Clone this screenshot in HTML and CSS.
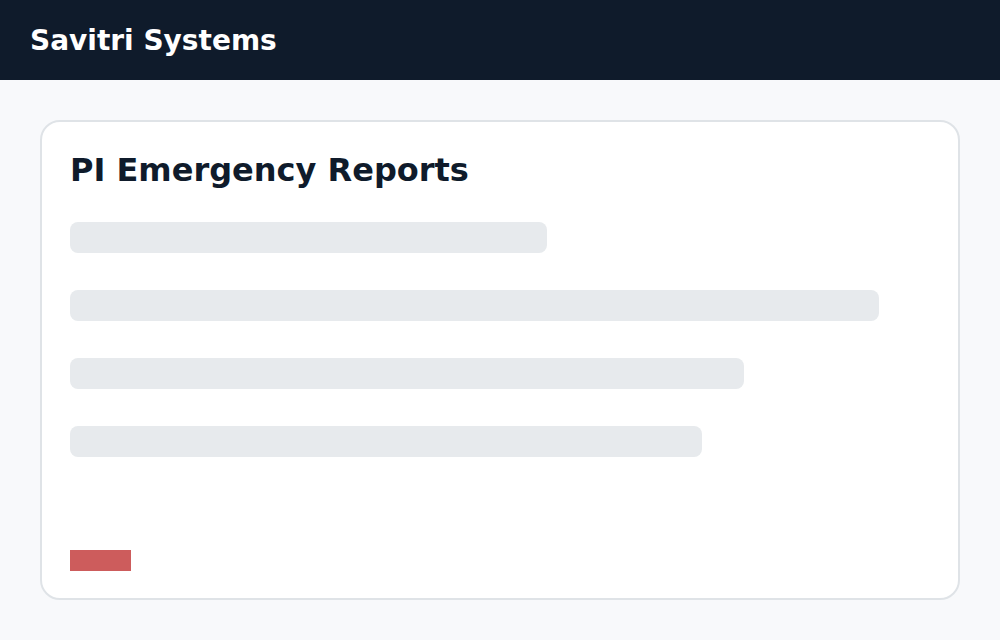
FILE: index.html
```html
<!DOCTYPE html>
<html lang="en">

<head>
  <meta charset="UTF-8" />
  <meta name="viewport" content="width=device-width, initial-scale=1.0"/>
  <title>Savitri Systems</title>
  <link rel="stylesheet" href="styles.css">
</head>

<body>
  <header class="topbar">
    <div class="brand">Savitri Systems</div>
  </header>

  <main class="main">
    <section class="card">
      <h1 class="card-title">PI Emergency Reports</h1>
      <div class="skeleton-list">
        <div class="skeleton" style="width: 477px"></div>
        <div class="skeleton" style="width: 809px"></div>
        <div class="skeleton" style="width: 674px"></div>
        <div class="skeleton" style="width: 632px"></div>
      </div>
      <div class="alert-chip"></div>
    </section>
  </main>
</body>

</html>
```

FILE: styles.css
```css
* {
  margin: 0;
  padding: 0;
  box-sizing: border-box;
}

:root {
  --navy: #0f1b2b;
  --page: #f8f9fb;
  --card: #ffffff;
  --line: #dfe3e7;
  --skeleton: #e7eaed;
  --danger: #cd5c5c;
}

body {
  font-family: 'DejaVu Sans', Verdana, sans-serif;
  background-color: var(--page);
  color: var(--navy);
}

.topbar {
  height: 80px;
  background-color: var(--navy);
  display: flex;
  align-items: center;
  padding: 0 30px;
}

.brand {
  color: #ffffff;
  font-size: 28px;
  font-weight: bold;
  line-height: 34px;
  padding-top: 2px;
}

.main {
  padding: 40px;
}

.card {
  height: 480px;
  background-color: var(--card);
  border: 2px solid var(--line);
  border-radius: 20px;
  padding: 29px 28px 27px;
  display: flex;
  flex-direction: column;
}

.card-title {
  font-size: 32px;
  font-weight: bold;
  line-height: 38px;
  margin-bottom: 33px;
}

.skeleton-list {
  display: flex;
  flex-direction: column;
  gap: 37px;
}

.skeleton {
  height: 31px;
  border-radius: 8px;
  background-color: var(--skeleton);
}

.alert-chip {
  margin-top: auto;
  width: 61px;
  height: 21px;
  background-color: var(--danger);
}
```
